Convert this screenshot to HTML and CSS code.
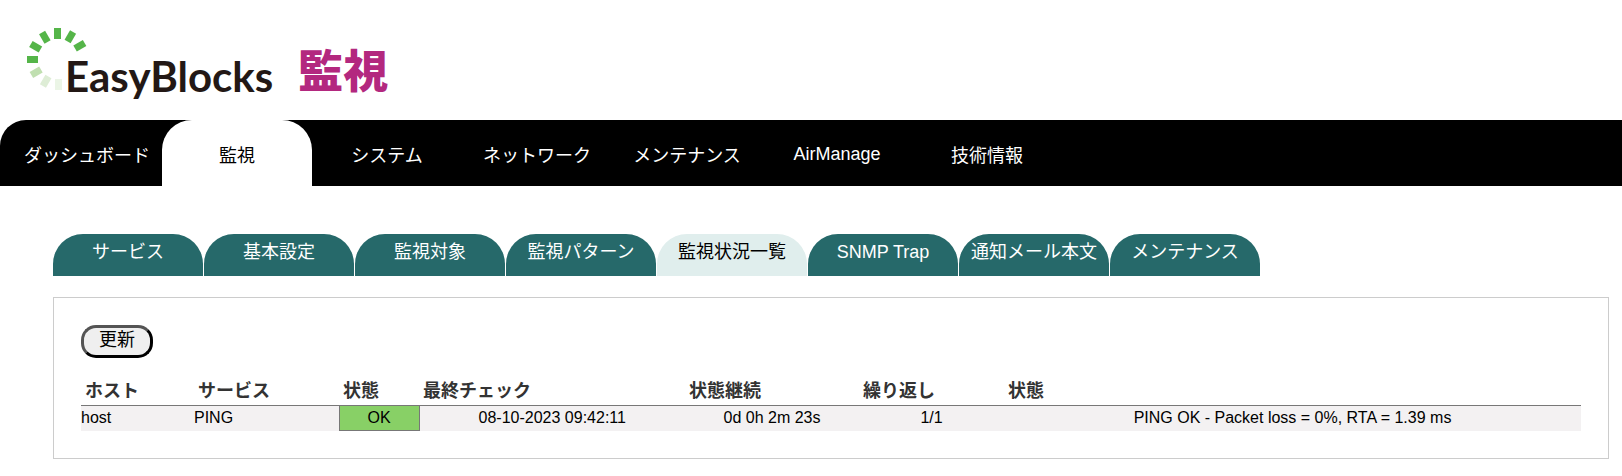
FILE: index.html
```
<!DOCTYPE html>
<html lang="ja">
<head>
<meta charset="utf-8">
<title>EasyBlocks 監視</title>
<link rel="stylesheet" href="styles.css">
</head>
<body>
<header class="brand">
  <svg class="brand-mark" viewBox="0 0 62 62" aria-hidden="true">
    <defs><rect id="tick" x="27" y="0" width="7" height="11"/></defs>
    <g fill="#55b549">
      <use href="#tick" transform="rotate(-90 31 31)"/>
      <use href="#tick" transform="rotate(-60 31 31)"/>
      <use href="#tick" transform="rotate(-30 31 31)"/>
      <use href="#tick"/>
      <use href="#tick" transform="rotate(30 31 31)"/>
      <use href="#tick" transform="rotate(60 31 31)"/>
    </g>
    <use href="#tick" fill="#c0dfb0" transform="rotate(-120 31 31)"/>
    <use href="#tick" fill="#deedd6" transform="rotate(-150 31 31)"/>
    <use href="#tick" fill="#ebf5e6" transform="rotate(180 31 31)"/>
  </svg>
  <span class="brand-name">EasyBlocks</span>
  <span class="brand-product">監視</span>
</header>
<nav class="main-nav">
  <a href="#">ダッシュボード</a>
  <a href="#" class="active" aria-current="page">監視</a>
  <a href="#">システム</a>
  <a href="#">ネットワーク</a>
  <a href="#">メンテナンス</a>
  <a href="#" class="latin">AirManage</a>
  <a href="#">技術情報</a>
</nav>
<main class="content">
  <nav class="tabs">
    <a href="#">サービス</a>
    <a href="#">基本設定</a>
    <a href="#">監視対象</a>
    <a href="#">監視パターン</a>
    <a href="#" class="active" aria-current="page">監視状況一覧</a>
    <a href="#">SNMP Trap</a>
    <a href="#">通知メール本文</a>
    <a href="#">メンテナンス</a>
  </nav>
  <section class="panel">
    <button type="button" class="refresh">更新</button>
    <table class="status">
      <colgroup>
        <col class="col-host"><col class="col-service"><col class="col-state"><col class="col-check"><col class="col-duration"><col class="col-retry"><col>
      </colgroup>
      <thead>
        <tr><th>ホスト</th><th>サービス</th><th>状態</th><th>最終チェック</th><th>状態継続</th><th>繰り返し</th><th>状態</th></tr>
      </thead>
      <tbody>
        <tr><td class="name">host</td><td class="name">PING</td><td class="ok">OK</td><td>08-10-2023 09:42:11</td><td>0d 0h 2m 23s</td><td>1/1</td><td>PING OK - Packet loss = 0%, RTA = 1.39 ms</td></tr>
      </tbody>
    </table>
  </section>
</main>
</body>
</html>
```
FILE: styles.css
```
* {
  box-sizing: border-box;
}

body {
  margin: 0;
  background: #fff;
  color: #000;
  font-family: "Liberation Sans", "Noto Sans CJK JP", sans-serif;
  font-size: 16px;
}

a {
  color: inherit;
  text-decoration: none;
}

.brand {
  display: flex;
  align-items: flex-start;
  height: 120px;
  padding: 28px 27px 0;
}

.brand-mark {
  width: 62px;
  height: 62px;
}

.brand-name {
  margin: 17px 0 0 -24px;
  color: #231815;
  font-family: Lato, sans-serif;
  font-size: 42px;
  font-weight: 700;
  line-height: 62px;
}

.brand-product {
  margin: 10px 0 0 25px;
  color: #b3287f;
  font-family: "Noto Sans CJK JP", sans-serif;
  font-size: 45px;
  font-weight: 900;
  line-height: 62px;
}

.main-nav {
  display: flex;
  padding-left: 12px;
  background: #000;
  border-top-left-radius: 26px;
  color: #fff;
  font-size: 18px;
}

.main-nav a {
  width: 150px;
  height: 66px;
  border-radius: 30px 30px 0 0;
  line-height: 73px;
  text-align: center;
}

.main-nav .latin {
  line-height: 68px;
}

.main-nav .active {
  background: #fff;
  color: #000;
}

.content {
  padding: 48px 13px 12px 53px;
}

.tabs {
  display: flex;
  gap: 1px;
  color: #fff;
  font-size: 18px;
}

.tabs a {
  width: 150px;
  height: 42px;
  background: #26696a;
  border-radius: 30px 30px 0 0;
  line-height: 36px;
  text-align: center;
  white-space: nowrap;
}

.tabs .active {
  background: #e0eeed;
  color: #000;
}

.panel {
  margin-top: 21px;
  padding: 27px;
  border: 1px solid #ccc;
}

.refresh {
  display: block;
  width: 72px;
  height: 33px;
  padding: 0 0 3px;
  background: #efefef;
  border: 3px outset #000;
  border-radius: 15px;
  color: #000;
  font-family: inherit;
  font-size: 18px;
  line-height: 24px;
}

.status {
  width: 100%;
  margin-top: 18px;
  border-collapse: collapse;
  table-layout: fixed;
}

.col-host { width: 113px; }
.col-service { width: 145px; }
.col-state { width: 80px; }
.col-check { width: 266px; }
.col-duration { width: 174px; }
.col-retry { width: 145px; }

.status th {
  height: 29px;
  padding: 1px 4px 0;
  color: #333;
  font-size: 18px;
  line-height: 28px;
  text-align: left;
}

.status td {
  height: 25px;
  padding: 0;
  border-top: 1px solid #777;
  background: #f3f1f2;
  line-height: 24px;
  text-align: center;
}

.status .name {
  text-align: left;
}

.status .ok {
  border: 1px solid #777;
  background: #88d066;
}
```
